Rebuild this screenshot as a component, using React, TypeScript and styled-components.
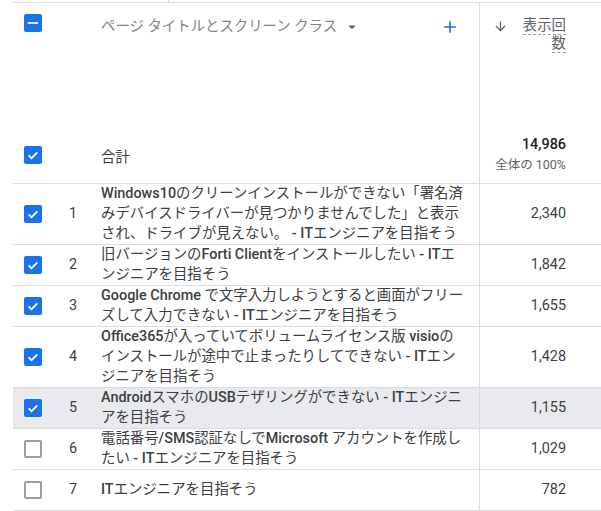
import React from "react";
import styled, { createGlobalStyle } from "styled-components";

const GlobalStyle = createGlobalStyle`
  html, body {
    margin: 0;
    padding: 0;
    background: #ffffff;
  }
  body {
    font-family: Roboto, "Noto Sans CJK JP", sans-serif;
    color: #3c4043;
  }
`;

const Page = styled.div`
  padding-left: 13px;
  width: 601px;
  box-sizing: border-box;
`;

const TopStrip = styled.div`
  height: 2px;
  width: 155px;
  border-right: 1px solid #dadce0;
`;

const Table = styled.div`
  border-top: 1px solid #dadce0;
`;

const Grid = styled.div<{ $bg?: string }>`
  display: grid;
  grid-template-columns: 47px 41px 378px 1fr;
  background: ${(p) => p.$bg || "#ffffff"};
`;

const HeadRow = styled(Grid)`
  height: 124px;
  align-items: start;
`;

const TotalRow = styled(Grid)`
  height: 56px;
  align-items: center;
  border-bottom: 1px solid #dadce0;
`;

const Row = styled(Grid)`
  min-height: 40px;
  align-items: center;
  border-bottom: 1px solid #dadce0;
`;

const BoxCell = styled.div<{ $top?: number }>`
  padding-left: 11px;
  padding-top: ${(p) => p.$top || 0}px;
  display: flex;
  align-items: center;
`;

const IndexCell = styled.div`
  padding-left: 9px;
  font-size: 14.4px;
  line-height: 20px;
`;

const TitleCell = styled.div`
  padding-right: 14px;
  font-size: 14.4px;
  line-height: 20px;
  color: #3c4043;
`;

const Strong = styled.span`
  font-weight: 500;
`;

const ValueCell = styled.div`
  align-self: stretch;
  display: flex;
  flex-direction: column;
  align-items: flex-end;
  justify-content: center;
  padding-right: 35px;
  border-left: 1px solid #dadce0;
  font-size: 14.4px;
  line-height: 20px;
`;

const HeadTitle = styled.div`
  padding-top: 14px;
  padding-right: 19px;
  display: flex;
  align-items: center;
  font-size: 14.4px;
  line-height: 20px;
  color: #80868b;
`;

const Caret = styled.span`
  display: inline-flex;
  margin-left: 6px;
  color: #5f6368;
`;

const AddButton = styled.span`
  margin-left: auto;
  display: inline-flex;
  color: #1a73e8;
`;

const HeadMetric = styled.div`
  align-self: stretch;
  border-left: 1px solid #dadce0;
  padding: 14px 35px 0 0;
  display: flex;
  justify-content: flex-end;
  align-items: flex-start;
  gap: 14px;
`;

const SortIcon = styled.span`
  display: inline-flex;
  margin-top: 2px;
  color: #5f6368;
`;

const MetricLabel = styled.div`
  width: 44px;
  text-align: right;
  font-size: 14.4px;
  line-height: 18px;
  color: #5f6368;

  span {
    border-bottom: 1px dashed #9aa0a6;
  }
`;

const TotalLabel = styled.div`
  font-size: 14.4px;
  color: #3c4043;
`;

const TotalValue = styled.div`
  font-size: 14.4px;
  font-weight: 500;
  color: #202124;
  line-height: 20px;
`;

const TotalShare = styled.div`
  font-size: 12.5px;
  color: #5f6368;
  line-height: 20px;
`;

const Box = styled.span<{ $on: boolean }>`
  width: 18px;
  height: 18px;
  box-sizing: border-box;
  border-radius: 2px;
  display: inline-flex;
  align-items: center;
  justify-content: center;
  background: ${(p) => (p.$on ? "#1a73e8" : "#ffffff")};
  border: ${(p) => (p.$on ? "none" : "2px solid #9e9e9e")};
`;

function Checkbox({ state }: { state: "on" | "off" | "mixed" }) {
  return (
    <Box $on={state !== "off"}>
      {state === "on" && (
        <svg width="14" height="14" viewBox="0 0 24 24">
          <path
            d="M4.5 12.5l5 5 10-10"
            fill="none"
            stroke="#ffffff"
            strokeWidth="3"
          />
        </svg>
      )}
      {state === "mixed" && (
        <svg width="14" height="14" viewBox="0 0 24 24">
          <rect x="3" y="10.5" width="18" height="3" fill="#ffffff" />
        </svg>
      )}
    </Box>
  );
}

type Item = { title: string; views: string; checked: boolean };

const items: Item[] = [
  {
    title:
      "**Windows10**のクリーンインストールができない「署名済みデバイスドライバーが見つかりませんでした」と表示され、ドライブが見えない。 **- IT**エンジニアを目指そう",
    views: "2,340",
    checked: true,
  },
  {
    title: "旧バージョンの**Forti Client**をインストールしたい **- IT**エンジニアを目指そう",
    views: "1,842",
    checked: true,
  },
  {
    title:
      "**Google Chrome** で文字入力しようとすると画面がフリーズして入力できない **- IT**エンジニアを目指そう",
    views: "1,655",
    checked: true,
  },
  {
    title:
      "**Office365**が入っていてボリュームライセンス版 **visio**のインストールが途中で止まったりしてできない **- IT**エンジニアを目指そう",
    views: "1,428",
    checked: true,
  },
  {
    title: "**Android**スマホの**USB**テザリングができない **- IT**エンジニアを目指そう",
    views: "1,155",
    checked: true,
  },
  {
    title: "電話番号**/SMS**認証なしで**Microsoft** アカウントを作成したい **- IT**エンジニアを目指そう",
    views: "1,029",
    checked: false,
  },
  { title: "**IT**エンジニアを目指そう", views: "782", checked: false },
];

// latin runs are wrapped in ** and shown in medium weight
function renderTitle(text: string) {
  return text
    .split("**")
    .map((part, i) => (i % 2 === 1 ? <Strong key={i}>{part}</Strong> : part));
}

export default function App() {
  return (
    <Page>
      <GlobalStyle />
      <TopStrip />
      <Table>
        <HeadRow>
          <BoxCell $top={11}>
            <Checkbox state="mixed" />
          </BoxCell>
          <div />
          <HeadTitle>
            ページ タイトルとスクリーン クラス
            <Caret>
              <svg width="18" height="18" viewBox="0 0 24 24">
                <path d="M7 10l5 5 5-5z" fill="currentColor" />
              </svg>
            </Caret>
            <AddButton>
              <svg width="20" height="20" viewBox="0 0 24 24">
                <path d="M19 13h-6v6h-2v-6H5v-2h6V5h2v6h6v2z" fill="currentColor" />
              </svg>
            </AddButton>
          </HeadTitle>
          <HeadMetric>
            <SortIcon>
              <svg width="15" height="15" viewBox="0 0 24 24">
                <path
                  d="M20 12l-1.41-1.41L13 16.17V4h-2v12.17l-5.58-5.59L4 12l8 8 8-8z"
                  fill="currentColor"
                />
              </svg>
            </SortIcon>
            <MetricLabel>
              <span>表示回数</span>
            </MetricLabel>
          </HeadMetric>
        </HeadRow>
        <TotalRow>
          <BoxCell>
            <Checkbox state="on" />
          </BoxCell>
          <div />
          <TotalLabel>合計</TotalLabel>
          <ValueCell>
            <TotalValue>14,986</TotalValue>
            <TotalShare>全体の 100%</TotalShare>
          </ValueCell>
        </TotalRow>
        {items.map((item, i) => (
          <Row key={i} $bg={i === 4 ? "#e8eaed" : undefined}>
            <BoxCell>
              <Checkbox state={item.checked ? "on" : "off"} />
            </BoxCell>
            <IndexCell>{i + 1}</IndexCell>
            <TitleCell>{renderTitle(item.title)}</TitleCell>
            <ValueCell>{item.views}</ValueCell>
          </Row>
        ))}
      </Table>
    </Page>
  );
}
